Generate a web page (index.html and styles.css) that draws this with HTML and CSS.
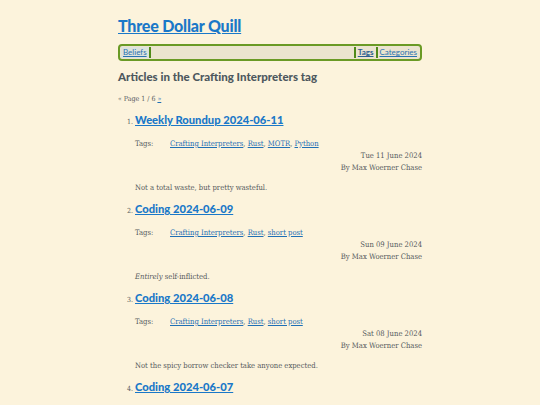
FILE: index.html
```html
<!DOCTYPE html>
<html>
<head>
<meta charset="utf-8">
<link rel="stylesheet" href="styles.css">
</head>
<body>
<div class="page">
  <header class="site-header">
    <h1 class="site-title"><a href="#">Three Dollar Quill</a></h1>
    <nav class="menu">
      <a class="menu-link current" href="#">Beliefs</a>
      <span class="menu-sep"></span>
      <span class="menu-fill"></span>
      <span class="menu-sep"></span>
      <a class="menu-link strong" href="#">Tags</a>
      <span class="menu-sep"></span>
      <a class="menu-link" href="#">Categories</a>
    </nav>
  </header>
  <main>
    <h2 class="page-heading">Articles in the Crafting Interpreters tag</h2>
    <p class="pager">« Page 1 / 6 <a href="#">»</a></p>
    <ol class="articles">
      <li class="article">
        <h3 class="article-title"><a href="#">Weekly Roundup 2024-06-11</a></h3>
        <div class="tags"><span class="tags-label">Tags:</span><span><a href="#">Crafting Interpreters</a>, <a href="#">Rust</a>, <a href="#">MOTR</a>, <a href="#">Python</a></span></div>
        <div class="meta"><div>Tue 11 June 2024</div><div>By Max Woerner Chase</div></div>
        <p class="summary">Not a total waste, but pretty wasteful.</p>
      </li>
      <li class="article">
        <h3 class="article-title"><a href="#">Coding 2024-06-09</a></h3>
        <div class="tags"><span class="tags-label">Tags:</span><span><a href="#">Crafting Interpreters</a>, <a href="#">Rust</a>, <a href="#">short post</a></span></div>
        <div class="meta"><div>Sun 09 June 2024</div><div>By Max Woerner Chase</div></div>
        <p class="summary"><em>Entirely</em> self-inflicted.</p>
      </li>
      <li class="article">
        <h3 class="article-title"><a href="#">Coding 2024-06-08</a></h3>
        <div class="tags"><span class="tags-label">Tags:</span><span><a href="#">Crafting Interpreters</a>, <a href="#">Rust</a>, <a href="#">short post</a></span></div>
        <div class="meta"><div>Sat 08 June 2024</div><div>By Max Woerner Chase</div></div>
        <p class="summary">Not the spicy borrow checker take anyone expected.</p>
      </li>
      <li class="article">
        <h3 class="article-title"><a href="#">Coding 2024-06-07</a></h3>
      </li>
    </ol>
  </main>
</div>
</body>
</html>
```
FILE: styles.css
```css
html, body {
  margin: 0;
  padding: 0;
  background: #fcf3dc;
}
body {
  font-family: "DejaVu Serif Condensed", "DejaVu Serif", serif;
  color: #555a5c;
  font-size: 7.6px;
}
.page {
  width: 304px;
  margin: 0 auto;
  padding-top: 14px;
}
a {
  color: #1f6fb5;
}
.site-title {
  margin: 0;
  font-family: Lato, sans-serif;
  font-size: 16px;
  font-weight: 900;
  line-height: 24px;
  letter-spacing: -0.2px;
}
.site-title a {
  color: #1a78c8;
}
.menu {
  margin-top: 6px;
  display: flex;
  align-items: center;
  height: 13px;
  border: 2px solid #6a9a25;
  border-radius: 4px;
  background: #ebe4cf;
  padding: 0 1px;
  font-family: Lato, sans-serif;
  font-size: 8px;
}
.menu-link {
  padding: 0 2px;
  line-height: 11px;
  color: #2a72b0;
}
.menu-link.current {
  background: #dde3dc;
}
.menu-link.strong {
  font-weight: 700;
  color: #2a6090;
}
.menu-sep {
  width: 2px;
  height: 11px;
  background: #4f8a1a;
}
.menu-fill {
  flex: 1;
}
.page-heading {
  margin: 7px 0 0;
  font-family: Lato, sans-serif;
  font-size: 11.5px;
  font-weight: 900;
  line-height: 18px;
  color: #4d585e;
}
.pager {
  margin: 8px 0 0;
  font-size: 7px;
  line-height: 10px;
}
.articles {
  margin: 7px 0 0;
  padding-left: 17px;
  font-size: 7.6px;
}
.article {
  margin-bottom: 7px;
}
.article::marker {
  font-size: 7px;
}
.article-title {
  margin: 0;
  font-family: Lato, sans-serif;
  font-size: 11.2px;
  font-weight: 900;
  line-height: 18px;
}
.article-title a {
  color: #1a78c8;
}
.tags {
  display: flex;
  margin-top: 9px;
  line-height: 12px;
}
.tags-label {
  width: 35px;
}
.meta {
  text-align: right;
  line-height: 12px;
}
.summary {
  margin: 8px 0 0;
  line-height: 11px;
}
```
